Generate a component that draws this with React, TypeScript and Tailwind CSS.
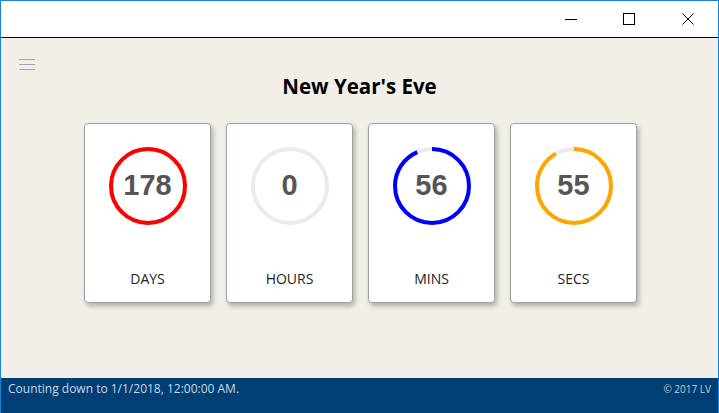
import React from "react";

type Ring = { value: number; max: number; color: string; label: string };

const rings: Ring[] = [
  { value: 178, max: 178, color: "#ff0000", label: "DAYS" },
  { value: 0, max: 24, color: "#0000ff", label: "HOURS" },
  { value: 56, max: 60, color: "#0000ff", label: "MINS" },
  { value: 55, max: 60, color: "#ffa500", label: "SECS" },
];

const R = 37;
const C = 2 * Math.PI * R;

const CountCard = ({ value, max, color, label }: Ring) => {
  const frac = max ? value / max : 0;
  return (
    <div className="flex h-[180px] w-[127px] flex-col items-center rounded-[4px] border border-[#a3a3a3] bg-white pt-[22px] shadow-[2px_3px_5px_rgba(0,0,0,0.28)]">
      <div className="relative h-[80px] w-[80px]">
        <svg width="80" height="80" viewBox="0 0 80 80" className="absolute inset-0">
          <circle cx="40" cy="40" r={R} fill="none" stroke="#ebebeb" strokeWidth="4" />
          {frac > 0 && (
            <circle
              cx="40"
              cy="40"
              r={R}
              fill="none"
              stroke={color}
              strokeWidth="4"
              strokeDasharray={`${C * frac} ${C}`}
              transform="rotate(-90 40 40)"
            />
          )}
        </svg>
        <div className="absolute inset-0 flex items-center justify-center font-['Liberation_Sans',Arial,sans-serif] text-[29px] font-bold text-[#555555]">
          {value}
        </div>
      </div>
      <div className="mt-[43px] font-['Open_Sans',sans-serif] text-[14px] leading-[20px] text-[#222222]">
        {label}
      </div>
    </div>
  );
};

export default function App() {
  return (
    <div className="flex h-[413px] w-[719px] flex-col overflow-hidden border-x border-t border-[#1883d7] bg-[#f2efe9]">
      <div className="flex h-[37px] shrink-0 items-center justify-end border-b border-black bg-white">
        <div className="flex h-full w-[58px] items-center justify-center">
          <div className="h-px w-[12px] bg-black" />
        </div>
        <div className="flex h-full w-[58px] items-center justify-center">
          <div className="h-[12px] w-[12px] border border-black" />
        </div>
        <div className="flex h-full w-[60px] items-center justify-center">
          <svg width="12" height="12" viewBox="0 0 12 12">
            <path d="M0.5 0.5 L11.5 11.5 M11.5 0.5 L0.5 11.5" stroke="#000" strokeWidth="1" />
          </svg>
        </div>
      </div>

      <div className="flex h-[340px] shrink-0 flex-col pt-[21px]">
        <div className="ml-[18px] flex h-[11px] w-[16px] flex-col justify-between">
          <div className="h-px bg-[#98a7b7]" />
          <div className="h-px bg-[#98a7b7]" />
          <div className="h-px bg-[#98a7b7]" />
        </div>
        <h1 className="mt-[2px] text-center font-['Open_Sans',sans-serif] text-[20.5px] font-bold leading-[28px] text-black">
          New Year's Eve
        </h1>
        <div className="mt-[23px] flex justify-center gap-[15px] pl-[2px]">
          {rings.map((r) => (
            <CountCard key={r.label} {...r} />
          ))}
        </div>
      </div>

      <div className="flex flex-1 items-start justify-between bg-[#003f73] px-[7px]">
        <div className="flex h-[22px] items-center whitespace-nowrap font-['Open_Sans',sans-serif] text-[12px] text-[#c9d7e6]">
          Counting down to 1/1/2018, 12:00:00 AM.
        </div>
        <div className="flex h-[22px] items-center font-['Open_Sans',sans-serif] text-[10px] text-[#c3cbd3]">
          © 2017 LV
        </div>
      </div>
    </div>
  );
}
